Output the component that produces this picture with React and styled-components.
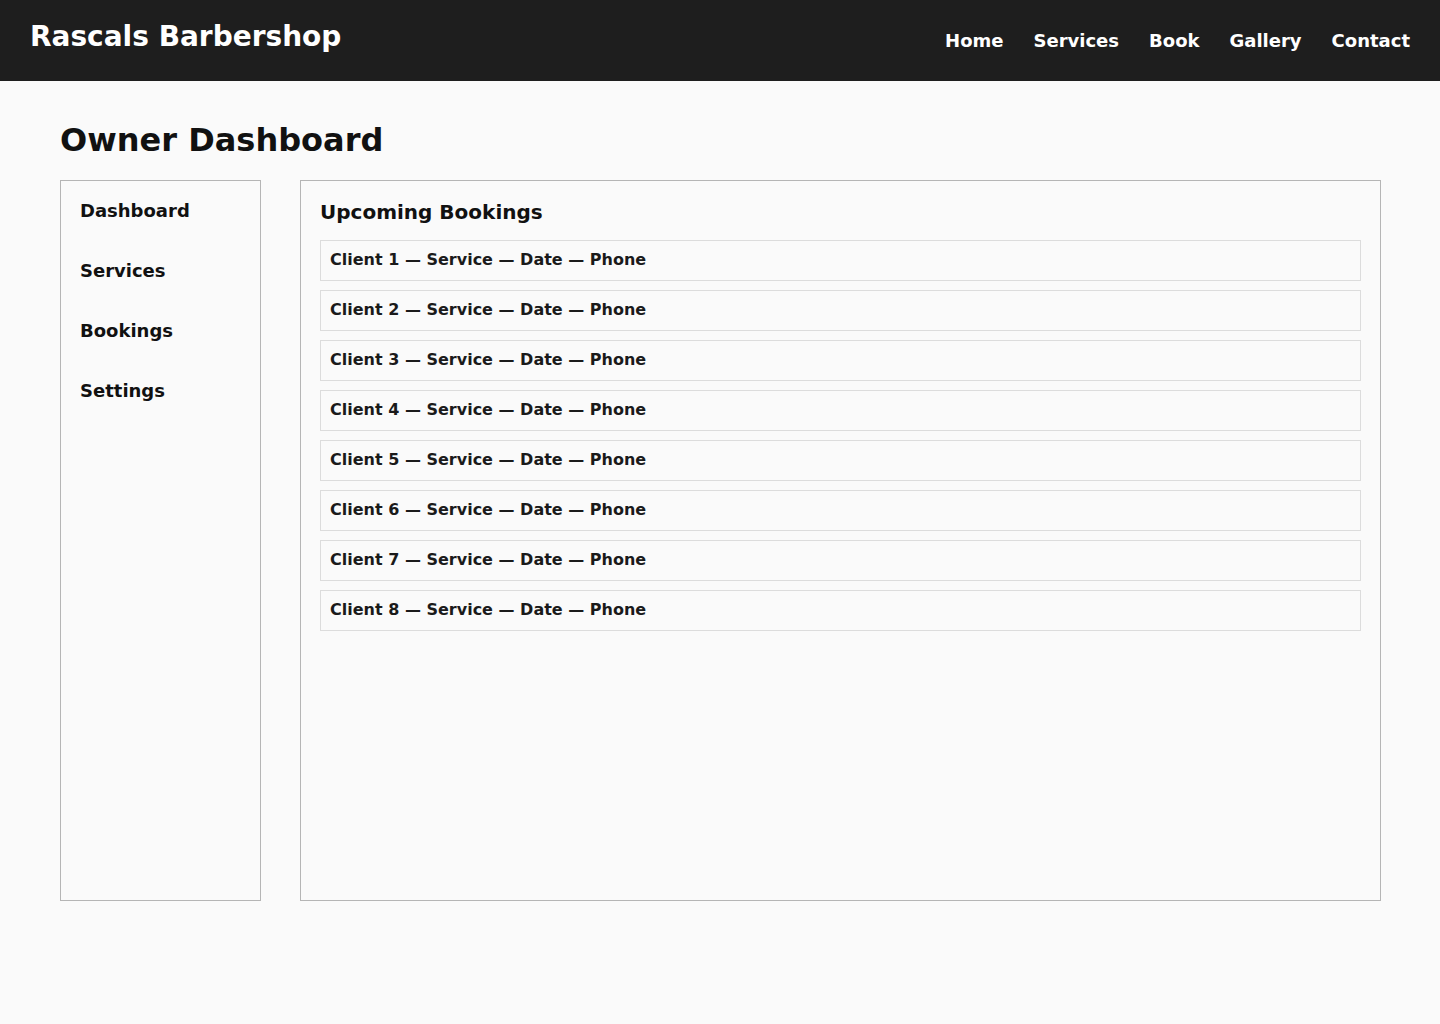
import React from 'react';
import styled, { createGlobalStyle } from 'styled-components';

const GlobalStyle = createGlobalStyle`
  body {
    margin: 0;
    background: #fafafa;
    color: #111;
    font-family: "DejaVu Sans", "Liberation Sans", sans-serif;
  }
  * { box-sizing: border-box; }
`;

const Header = styled.header`
  display: flex;
  justify-content: space-between;
  align-items: flex-start;
  height: 81px;
  padding: 20px 30px 0;
  background: #1e1e1e;
  color: #fff;
`;

const Brand = styled.h1`
  margin: 0;
  font-size: 28px;
  font-weight: bold;
`;

const Nav = styled.nav`
  display: flex;
  gap: 30px;
  margin-top: 10px;
`;

const NavLink = styled.a`
  color: #fff;
  font-size: 18px;
  font-weight: bold;
  text-decoration: none;
`;

const Main = styled.main`
  padding: 40px 60px;
`;

const PageTitle = styled.h2`
  margin: 0 0 21px;
  font-size: 32px;
  font-weight: bold;
  color: #111;
`;

const Layout = styled.div`
  display: flex;
  gap: 39px;
`;

const Sidebar = styled.aside`
  flex-shrink: 0;
  width: 201px;
  height: 721px;
  padding: 20px 19px;
  border: 1px solid #b5b5b5;
  display: flex;
  flex-direction: column;
  gap: 40px;
`;

const SideItem = styled.div`
  font-size: 18px;
  line-height: 20px;
  font-weight: bold;
  color: #111;
`;

const Panel = styled.section`
  flex-shrink: 0;
  width: 1081px;
  height: 721px;
  padding: 19px;
  border: 1px solid #b5b5b5;
`;

const PanelTitle = styled.h3`
  margin: 0 0 16px;
  font-size: 20px;
  line-height: 24px;
  font-weight: bold;
  color: #111;
`;

const List = styled.div`
  display: flex;
  flex-direction: column;
  gap: 9px;
`;

const Row = styled.div`
  height: 41px;
  padding: 0 9px 2px;
  border: 1px solid #dcdcdc;
  display: flex;
  align-items: center;
  font-size: 16px;
  font-weight: bold;
  color: #1a1a1a;
`;

const navItems = ['Home', 'Services', 'Book', 'Gallery', 'Contact'];
const sideItems = ['Dashboard', 'Services', 'Bookings', 'Settings'];
const bookings = [1, 2, 3, 4, 5, 6, 7, 8];

export default function App() {
  return (
    <>
      <GlobalStyle />
      <Header>
        <Brand>Rascals Barbershop</Brand>
        <Nav>
          {navItems.map((n) => (
            <NavLink key={n} href="#">{n}</NavLink>
          ))}
        </Nav>
      </Header>
      <Main>
        <PageTitle>Owner Dashboard</PageTitle>
        <Layout>
          <Sidebar>
            {sideItems.map((s) => (
              <SideItem key={s}>{s}</SideItem>
            ))}
          </Sidebar>
          <Panel>
            <PanelTitle>Upcoming Bookings</PanelTitle>
            <List>
              {bookings.map((i) => (
                <Row key={i}>Client {i} — Service — Date — Phone</Row>
              ))}
            </List>
          </Panel>
        </Layout>
      </Main>
    </>
  );
}
